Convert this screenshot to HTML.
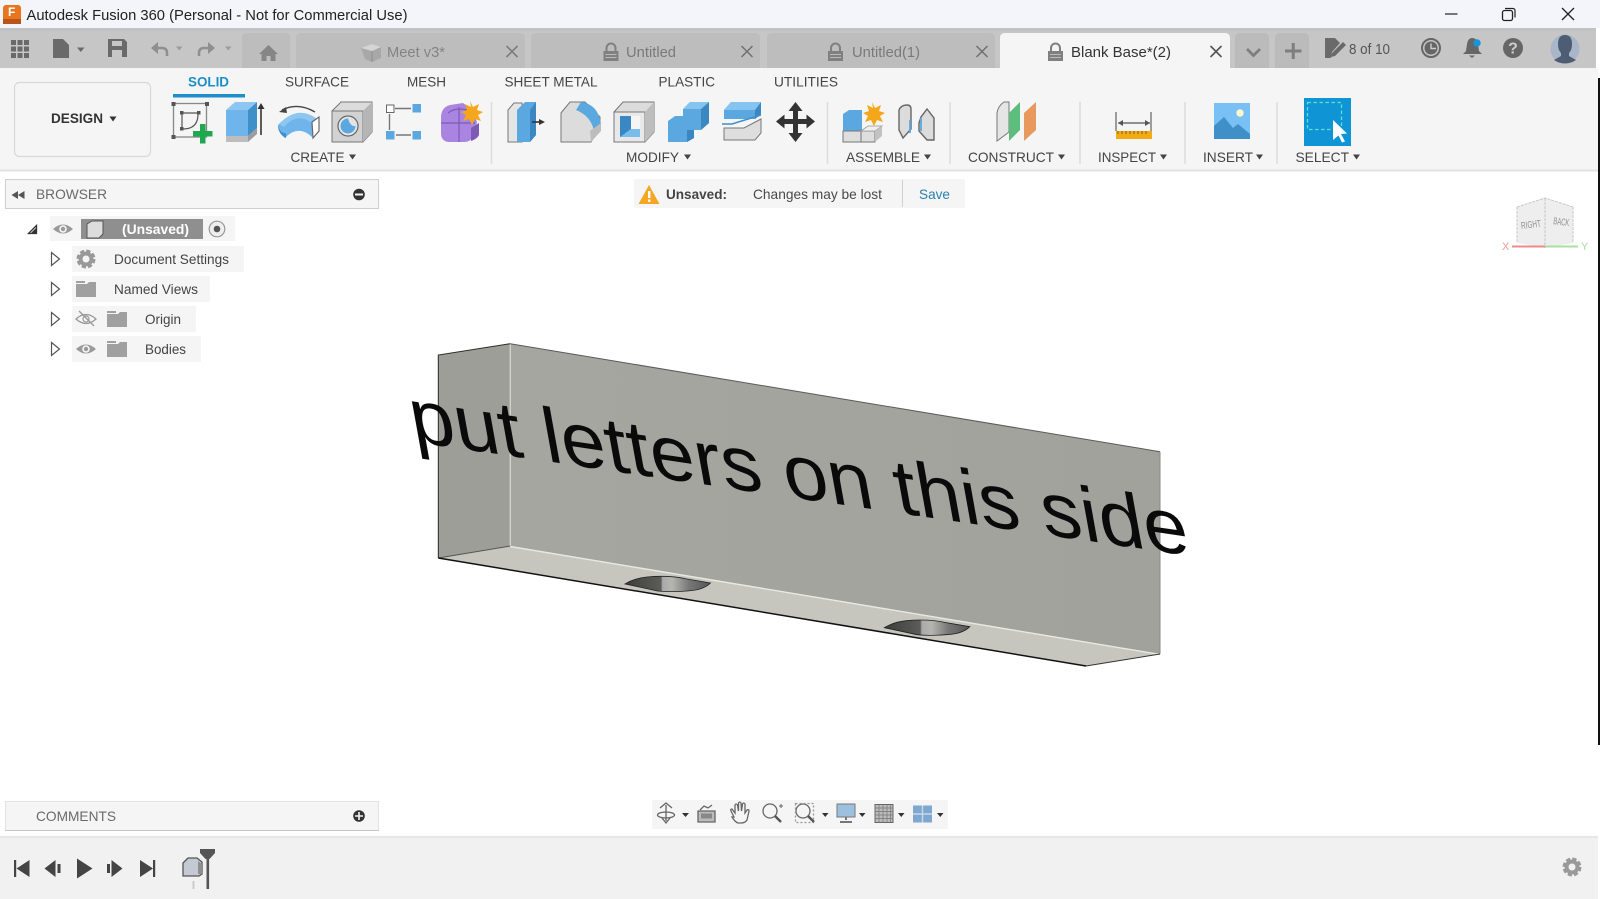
<!DOCTYPE html>
<html><head><meta charset="utf-8"><title>Autodesk Fusion 360</title>
<style>html,body{margin:0;padding:0;background:#fff;overflow:hidden}svg{display:block}text{font-family:"Liberation Sans",Arial,sans-serif}</style></head>
<body>
<svg width="1600" height="899" viewBox="0 0 1600 899" xmlns="http://www.w3.org/2000/svg">
<defs>
<linearGradient id="h1" x1="0" x2="1" y1="0" y2="0"><stop offset="0" stop-color="#3c3c3a"/><stop offset=".42" stop-color="#5c5c58"/><stop offset=".44" stop-color="#aaa"/><stop offset=".55" stop-color="#b5b5b0"/><stop offset=".75" stop-color="#777"/><stop offset="1" stop-color="#555"/></linearGradient>
<linearGradient id="ff" x1="0" x2="1" y1="0" y2="0"><stop offset="0" stop-color="#a6a6a0"/><stop offset="1" stop-color="#a2a29c"/></linearGradient>
<g id="eye"><path d="M-10 0Q0-9 10 0Q0 9-10 0Z" fill="#9a9a9a"/><circle r="3.800" fill="#f5f5f5"/><circle r="2.200" fill="#9a9a9a"/></g>
<g id="folder"><path d="M0 1h9v2H0z" fill="#a0a0a0"/><path d="M0 4h11l2-2h7v15H0z" fill="#a0a0a0"/></g>
<path id="expand" d="M0 0L8 6.500L0 13Z" fill="#fff" stroke="#555" stroke-width="1.200"/>
<g id="gear"><circle r="7.500" fill="none" stroke="#999" stroke-width="4" stroke-dasharray="3.900 2"/><circle r="5.500" fill="none" stroke="#999" stroke-width="4"/></g>
<g id="lock"><path d="M3 8V5a4.500 4.500 0 0 1 9 0v3" fill="none" stroke="#808080" stroke-width="2"/><rect y="8" width="15" height="10" fill="#808080"/><path d="M2 11.500h11M2 14.500h11" stroke="#bbb" stroke-width="1"/></g>
</defs>

<!-- title bar -->
<rect width="1600" height="28" fill="#f3f5fa"/>
<rect x="3" y="5" width="18" height="19" rx="3" fill="#e8761e"/>
<rect x="3" y="19" width="18" height="5" fill="#b9541a"/>
<text x="8" y="16" font-size="12" font-weight="bold" fill="#fff">F</text>
<text x="26.500" y="20" font-size="14.500" fill="#222" textLength="381" lengthAdjust="spacingAndGlyphs">Autodesk Fusion 360 (Personal - Not for Commercial Use)</text>
<path d="M1445 14h12.500" stroke="#222" stroke-width="1.200"/>
<path d="M1505 8.500h8a2 2 0 0 1 2 2v7" fill="none" stroke="#222" stroke-width="1.200"/>
<rect x="1502.500" y="10.500" width="10" height="10" rx="2" fill="none" stroke="#222" stroke-width="1.300"/>
<path d="M1562 8l12 12M1574 8l-12 12" stroke="#222" stroke-width="1.300"/>

<!-- tab bar -->
<rect y="28" width="1596" height="40" fill="#c6c6c6"/>
<rect y="28" width="1596" height="3" fill="#bfc3c3"/>
<g fill="#6a6a6a">
<rect x="11" y="40" width="5" height="5"/><rect x="17.500" y="40" width="5" height="5"/><rect x="24" y="40" width="5" height="5"/>
<rect x="11" y="46.500" width="5" height="5"/><rect x="17.500" y="46.500" width="5" height="5"/><rect x="24" y="46.500" width="5" height="5"/>
<rect x="11" y="53" width="5" height="5"/><rect x="17.500" y="53" width="5" height="5"/><rect x="24" y="53" width="5" height="5"/>
<path d="M53 39h10l6 6v13H53z"/>
<path d="M77 47.500h7.500l-3.750 4.500z"/>
<path d="M108 39h16l3 3v15h-19zM112 41v5h10v-5zM112 50v7h10v-7z" fill-rule="evenodd"/>
</g>
<g fill="none" stroke="#8f8f8f" stroke-width="2.500"><path d="M167 56v-3q0-5-5-5h-9"/><path d="M199 56v-3q0-5 5-5h9"/></g>
<path d="M158 42l-7 6 7 6zM208 42l7 6-7 6z" fill="#8f8f8f"/>
<path d="M176 46.500h6.500l-3.250 4zM225 46.500h6.500l-3.250 4z" fill="#9c9c9c"/>

<path d="M242 68V38q0-5 5-5h38q5 0 5 5v30z" fill="#bdbdbd"/>
<path d="M259 54l9.500-9 9.500 9h-2.500v7h-5v-5h-4v5h-5v-7z" fill="#868686"/>

<path d="M296 68V38q0-5 5-5h219q5 0 5 5v30z" fill="#bdbdbd"/>
<path d="M361 48l11-4 9 3v11l-9 4-7-3z" fill="#a8a8a8"/><path d="M361 48l11 3 9-4-9-3z" fill="#d5d5d5"/><path d="M372 51v11" stroke="#8d8d8d"/>
<text x="387" y="57" font-size="14.500" fill="#848484" textLength="58" lengthAdjust="spacingAndGlyphs">Meet v3*</text>
<path d="M506.500 46l11 11M517.500 46l-11 11" stroke="#7c7c7c" stroke-width="1.600"/>

<path d="M531 68V38q0-5 5-5h219q5 0 5 5v30z" fill="#bdbdbd"/>
<use href="#lock" x="603.500" y="43"/>
<text x="626" y="57" font-size="14.500" fill="#7a7a7a" textLength="50" lengthAdjust="spacingAndGlyphs">Untitled</text>
<path d="M741.500 46l11 11M752.500 46l-11 11" stroke="#707070" stroke-width="1.500"/>

<path d="M767 68V38q0-5 5-5h218q5 0 5 5v30z" fill="#bdbdbd"/>
<use href="#lock" x="828" y="43"/>
<text x="852" y="57" font-size="14.500" fill="#7a7a7a" textLength="68" lengthAdjust="spacingAndGlyphs">Untitled(1)</text>
<path d="M976.500 46l11 11M987.500 46l-11 11" stroke="#707070" stroke-width="1.500"/>

<path d="M1000 68V38q0-5 5-5h220q5 0 5 5v30z" fill="#f5f5f5"/>
<use href="#lock" x="1048" y="43"/>
<text x="1071" y="57" font-size="14.500" fill="#333" textLength="100" lengthAdjust="spacingAndGlyphs">Blank Base*(2)</text>
<path d="M1210.500 46l11 11M1221.500 46l-11 11" stroke="#555" stroke-width="1.600"/>

<path d="M1235 68V38q0-5 5-5h24q5 0 5 5v30z" fill="#bbb"/>
<path d="M1247 49l6.500 6.500 6.500-6.500" fill="none" stroke="#7e7e7e" stroke-width="2.800"/>
<path d="M1275 68V38q0-5 5-5h24q5 0 5 5v30z" fill="#bbb"/>
<path d="M1285 51h16.500M1293.250 43v16" stroke="#7e7e7e" stroke-width="3"/>

<path d="M1325 38h10l5 5-8 9-1 6h-6z" fill="#6a6a6a"/>
<path d="M1343 42l3 3-11 11-4 1 1-4z" fill="#6a6a6a"/>
<text x="1349" y="54" font-size="14.500" fill="#555" textLength="41" lengthAdjust="spacingAndGlyphs">8 of 10</text>
<circle cx="1431" cy="48" r="9" fill="none" stroke="#666" stroke-width="2"/><circle cx="1431" cy="48" r="6.500" fill="#666"/><path d="M1431 43.500V48.500h5" fill="none" stroke="#ccc" stroke-width="1.400"/>
<path d="M1472 38q5 0 6 6l1 7 3 3h-19l3-3 1-7q1-6 5-6z" fill="#666"/><path d="M1469 55.500h6l-3 2.500z" fill="#666"/>
<circle cx="1477" cy="43" r="3.700" fill="#1c93d8"/>
<circle cx="1513" cy="48" r="10" fill="#666"/>
<text x="1513" y="53.500" font-size="16" font-weight="bold" fill="#ccc" text-anchor="middle">?</text>
<circle cx="1565" cy="49" r="14.500" fill="#a9b5c9"/>
<path d="M1565 35q7 0 7 9 0 6-3 9v3l7 4q-5 3.500-11 3.500t-11-3.500l7-4v-3q-3-3-3-9 0-9 7-9z" fill="#4e5c74"/>

<!-- ribbon -->
<rect y="68" width="1598" height="102" fill="#f5f5f5"/>
<rect y="169.500" width="1598" height="2" fill="#e2e2e2"/>
<rect x="14.500" y="82.500" width="136" height="74" rx="5" fill="#f5f5f5" stroke="#d8d8d8" stroke-width="1.200"/>
<text x="51" y="123" font-size="14" font-weight="bold" fill="#333" textLength="52" lengthAdjust="spacingAndGlyphs">DESIGN</text>
<path d="M109.500 116.500h7l-3.500 5z" fill="#333"/>
<text x="188" y="86.500" font-size="14" font-weight="bold" fill="#1d8ec7" textLength="41" lengthAdjust="spacingAndGlyphs">SOLID</text>
<rect x="173" y="94" width="72" height="3.500" fill="#1d8ec7"/>
<g font-size="14" fill="#444">
<text x="285" y="86.500" textLength="64" lengthAdjust="spacingAndGlyphs">SURFACE</text>
<text x="407" y="86.500" textLength="39" lengthAdjust="spacingAndGlyphs">MESH</text>
<text x="504.500" y="86.500" textLength="93" lengthAdjust="spacingAndGlyphs">SHEET METAL</text>
<text x="658.500" y="86.500" textLength="56.500" lengthAdjust="spacingAndGlyphs">PLASTIC</text>
<text x="774" y="86.500" textLength="64" lengthAdjust="spacingAndGlyphs">UTILITIES</text>
<text x="290.500" y="162" textLength="54" lengthAdjust="spacingAndGlyphs">CREATE</text>
<text x="626" y="162" textLength="53" lengthAdjust="spacingAndGlyphs">MODIFY</text>
<text x="846" y="162" textLength="74" lengthAdjust="spacingAndGlyphs">ASSEMBLE</text>
<text x="968" y="162" textLength="86" lengthAdjust="spacingAndGlyphs">CONSTRUCT</text>
<text x="1098" y="162" textLength="58" lengthAdjust="spacingAndGlyphs">INSPECT</text>
<text x="1203" y="162" textLength="50" lengthAdjust="spacingAndGlyphs">INSERT</text>
<text x="1295.500" y="162" textLength="53.500" lengthAdjust="spacingAndGlyphs">SELECT</text>
</g>
<g fill="#444">
<path d="M349 154.500h7l-3.500 5zM684 154.500h7l-3.500 5zM924 154.500h7l-3.500 5zM1058 154.500h7l-3.500 5zM1160 154.500h7l-3.500 5zM1256 154.500h7l-3.500 5zM1353 154.500h7l-3.500 5z"/>
</g>
<g stroke="#dcdcdc" stroke-width="1.500"><path d="M491.500 102v62M827.500 102v62M950 102v62M1080 102v62M1185 102v62M1277 102v62"/></g>

<!-- sketch -->
<g>
<rect x="173.500" y="103.500" width="33" height="33.500" fill="none" stroke="#888" stroke-width="1.300"/>
<g fill="#555"><rect x="171.500" y="102" width="4" height="4"/><rect x="205" y="102" width="4" height="4"/><rect x="171.500" y="135" width="4" height="4"/><rect x="180" y="111" width="3.500" height="3.500"/><rect x="197" y="111" width="3.500" height="3.500"/><rect x="180" y="127" width="3.500" height="3.500"/></g>
<path d="M182 113h16M182 113v16M198 114q0 15-15 15" fill="none" stroke="#555" stroke-width="1.200"/>
<path d="M200 124h5.500v7h7v5.500h-7v7H200v-7h-7V131h7z" fill="#1fa84f"/>
</g>
<!-- extrude -->
<path d="M226 110h22v26h-22z" fill="#6fb4ea"/><path d="M248 110l9-8v26l-9 8z" fill="#3f8fc9"/><path d="M226 110h22l9-8h-22z" fill="#8cc6f1"/>
<path d="M226 136h22v6h-22z" fill="#bdbdbd"/><path d="M248 136l9-8v6l-9 8z" fill="#9c9c9c"/>
<path d="M261 135v-28" stroke="#333" stroke-width="1.600"/><path d="M257.500 109l3.500-6 3.500 6z" fill="#333"/>
<!-- revolve -->
<path d="M278 125Q297 106 315 121L312 137Q298 124 285 138Q278 133 278 125Z" fill="#6fb4ea"/>
<path d="M278 125Q280 134 286 133L286 138Q278 134 278 125Z" fill="#3f8fc9"/>
<path d="M279 124Q297 105 316 118L312 123Q297 112 284 127Z" fill="#8cc6f1"/>
<path d="M312 122l7-5v14l-6 7z" fill="#fff" stroke="#666" stroke-width="1.200"/>
<path d="M282 110q16-8 33 2" fill="none" stroke="#444" stroke-width="1.400"/><path d="M279 112l7-5 1 6z" fill="#444"/>
<!-- hole -->
<path d="M332 111l9-9h31v30l-9 10h-31z" fill="#dcdcdc" stroke="#777" stroke-width="1"/>
<path d="M332 111h31v31h-31z" fill="#d2d2d2" stroke="#777" stroke-width="1"/><path d="M363 111l9-9v30l-9 10z" fill="#b5b5b5"/>
<circle cx="348" cy="126" r="10" fill="#e5e5e5" stroke="#666" stroke-width="1.200"/><circle cx="348" cy="126" r="7.500" fill="#5ba8e0"/><path d="M348 118.500a7.500 7.500 0 0 1 7.500 7.500q-5 1-7.500-7.500z" fill="#e5e5e5"/>
<!-- pattern -->
<rect x="386.500" y="105" width="7.500" height="7.500" fill="#fff" stroke="#666" stroke-width="1"/><rect x="412.500" y="104" width="8.500" height="8.500" fill="#5ba8e0"/><rect x="386" y="131" width="8.500" height="8.500" fill="#5ba8e0"/><rect x="412.500" y="131" width="8.500" height="8.500" fill="#5ba8e0"/>
<path d="M395 108.500h16M389.500 114v16M396 135h15" stroke="#777" stroke-width="1.400"/>
<!-- form -->
<path d="M441 116q1-9 9-11l13-2 9 7 5 12-3 13q-3 7-10 7h-14q-9 0-9-9z" fill="#a984e0"/>
<path d="M448 113q7-6 19-3M441 123h34M459 107v35" stroke="#7d5bb5" stroke-width="1.200" fill="none"/>
<path d="M471 128l8-5v12q-2 4-8 6z" fill="#7d5bb5"/>
<path d="M470 101l3 6 6-3-2 6 6 2-5 3 3 6-6-2-3 6-3-6-6 2 3-6-5-3 6-2-2-6 6 3z" fill="#f5a71b"/>

<!-- press pull -->
<path d="M508 110l6-7h8v39h-14z" fill="#e5e5e5" stroke="#777" stroke-width="1"/>
<path d="M517 110l8-8h11v33l-6 7h-13z" fill="#5ba8e0"/><path d="M530 110l6-8v33l-6 7z" fill="#3a87c2"/>
<path d="M532 122h9" stroke="#333" stroke-width="1.600"/><path d="M539 119l6 3-6 3z" fill="#333"/>
<!-- fillet -->
<path d="M561 113l9-11h15l15 15v9l-9 16h-30z" fill="#dcdcdc" stroke="#777" stroke-width="1"/>
<path d="M581 102q17 2 20 22l-7 7q-3-15-18-21z" fill="#5ba8e0"/><path d="M590 131l11-8v8l-10 11z" fill="#bdbdbd"/>
<!-- shell -->
<path d="M614 112l9-10h31v30l-9 10h-31z" fill="#dcdcdc" stroke="#777" stroke-width="1"/><path d="M614 112h31v30h-31z" fill="#e8e8e8" stroke="#777" stroke-width="1"/><path d="M645 112l9-10v30l-9 10z" fill="#bdbdbd"/>
<path d="M620 116h11v13h9v8h-20z" fill="#3a87c2"/><path d="M631 116h9v13h-9z" fill="#f5f5f5"/><path d="M620 137l11-8h9v8z" fill="#78bcee"/>
<!-- combine -->
<path d="M668 121l7-5h8v-7l7-7h19v21l-8 7h-7v8l-7 4h-19z" fill="#5ba8e0"/>
<path d="M701 109l8-7v21l-8 7zM687 130l7 0v8l-7 4z" fill="#3a87c2"/>
<path d="M683 109h18l8-7h-19z" fill="#85c3f1"/>
<!-- split -->
<path d="M724 110l7-8h30v12l-6 5h-31z" fill="#5ba8e0"/><path d="M755 110l6-8v12l-6 5z" fill="#3a87c2"/><path d="M724 110h31l6-8h-30z" fill="#85c3f1"/>
<path d="M722 124h10l29-9" fill="none" stroke="#3f8fc9" stroke-width="1.500"/>
<path d="M724 128h20l17-9v14l-6 7h-31z" fill="#dedede" stroke="#777" stroke-width="1"/>
<!-- move -->
<path d="M795.500 102l7 9h-4.500v8h8.500v-4.500l8.500 7-8.500 7v-4.500h-8.500v9h4.500l-7 9-7-9h4.500v-9h-8.500v4.500l-8.500-7 8.500-7v4.500h8.500v-8h-4.500z" fill="#333"/>
<!-- new component -->
<path d="M843 121v-7l6-4h13v21h-19z" fill="#5ba8e0"/>
<path d="M843 131h18v11h-18z" fill="#dedede" stroke="#777" stroke-width="1"/>
<path d="M861 131h14v11h-14z" fill="#dedede" stroke="#777" stroke-width="1"/><path d="M861 131l7-5h14l-7 5z" fill="#efefef" stroke="#999" stroke-width=".8"/><path d="M875 131l7-5v10l-7 6z" fill="#c2c2c2"/>
<path d="M872 102l3 6 6-3-2 6 6 2-5 3 3 6-6-2-3 6-3-6-6 2 3-6-5-3 6-2-2-6 6 3z" fill="#f5a71b"/>
<!-- joint -->
<path d="M899 130v-20q2-5 8-5 4 0 4 4v20l-8 9z" fill="#dcdcdc" stroke="#666" stroke-width="1.400"/>
<path d="M934 140v-22l-7-9-6 8-2 6v8l8 9z" fill="#dcdcdc" stroke="#666" stroke-width="1.400"/>
<path d="M910 120v13M921 118v13" stroke="#5ba8e0" stroke-width="1.800"/>
<!-- construct -->
<path d="M997 113q1-7 7-11h5v30l-12 9z" fill="#e5e5e5" stroke="#777" stroke-width="1"/>
<path d="M1009 113l11-11v28l-11 11z" fill="#5cbd7d"/>
<path d="M1024 113l12-11v28l-12 11z" fill="#e89a5e"/>
<!-- inspect -->
<path d="M1116 112v19M1151 112v19" stroke="#777" stroke-width="1.400"/><path d="M1118 123h32" stroke="#555" stroke-width="1.200"/><path d="M1118 123l5-3v6zM1150 123l-5-3v6z" fill="#555"/>
<rect x="1116" y="131" width="36" height="8" fill="#f2aa15"/><path d="M1118 131v3M1122 131v3M1126 131v3M1130 131v3M1134 131v3M1138 131v3M1142 131v3M1146 131v3" stroke="#7a6128" stroke-width="1"/>
<!-- insert -->
<rect x="1214" y="103" width="36" height="36" fill="#79c1f5"/>
<path d="M1214 139v-13l10-9 9 11 5-4 12 10v5z" fill="#3f8fc9"/>
<circle cx="1240" cy="113" r="3.700" fill="#fff6c8"/>
<!-- select -->
<rect x="1304" y="98" width="47" height="48" fill="#0f94d6"/>
<rect x="1307.500" y="102.500" width="34" height="27" fill="none" stroke="#5fe0c8" stroke-width="1.300" stroke-dasharray="3.500 2.500"/>
<path d="M1333 120l14 13.500-6 .5 4 7.500-3 1-3.500-7-5.500 4.500z" fill="#fff"/>

<!-- browser -->
<rect x="5.500" y="179.500" width="373" height="29" fill="#f5f5f5" stroke="#cfcfcf"/>
<path d="M18 191v8l-6.500-4zM24.500 191v8l-6.500-4z" fill="#555"/>
<text x="36" y="199" font-size="14" fill="#6a6a6a" textLength="71" lengthAdjust="spacingAndGlyphs">BROWSER</text>
<circle cx="359" cy="194.500" r="5.800" fill="#333"/><rect x="355" y="193.500" width="8" height="2" fill="#f5f5f5"/>

<rect x="50" y="216" width="185" height="25" fill="#f5f5f5"/>
<path d="M28.500 233.500h8v-8z" fill="#fff" stroke="#333" stroke-width="1.300"/><path d="M31 233h5v-5z" fill="#333"/>
<use href="#eye" x="63" y="229"/>
<rect x="81" y="219" width="122" height="20" fill="#8f8f8f"/>
<path d="M87 224l5-3h11v13l-4 4H87z" fill="#dcdcdc" stroke="#555" stroke-width="1"/>
<text x="122" y="234" font-size="14" font-weight="bold" fill="#fff" textLength="67" lengthAdjust="spacingAndGlyphs">(Unsaved)</text>
<circle cx="217" cy="229" r="7.800" fill="#eee" stroke="#999" stroke-width="1.200"/><circle cx="217" cy="229" r="3.300" fill="#555"/>

<rect x="72" y="246" width="172" height="26" fill="#f5f5f5"/>
<use href="#expand" x="51.500" y="252.500"/><use href="#gear" x="86" y="259"/>
<text x="114" y="264" font-size="14" fill="#444" textLength="115" lengthAdjust="spacingAndGlyphs">Document Settings</text>

<rect x="72" y="276" width="138" height="26" fill="#f5f5f5"/>
<use href="#expand" x="51.500" y="282.500"/><use href="#folder" x="76" y="280"/>
<text x="114" y="294" font-size="14" fill="#444" textLength="84" lengthAdjust="spacingAndGlyphs">Named Views</text>

<rect x="72" y="306" width="124" height="26" fill="#f5f5f5"/>
<use href="#expand" x="51.500" y="312.500"/>
<path d="M76 319Q86 310 96 319Q86 328 76 319Z" fill="none" stroke="#999" stroke-width="1.300"/><circle cx="86" cy="319" r="3" fill="none" stroke="#999" stroke-width="1.200"/><path d="M79 311l15 15" stroke="#999" stroke-width="1.300"/>
<use href="#folder" x="107" y="310"/>
<text x="145" y="324" font-size="14" fill="#444" textLength="36" lengthAdjust="spacingAndGlyphs">Origin</text>

<rect x="72" y="336" width="129" height="26" fill="#f5f5f5"/>
<use href="#expand" x="51.500" y="342.500"/><use href="#eye" x="86" y="349"/><use href="#folder" x="107" y="340"/>
<text x="145" y="354" font-size="14" fill="#444" textLength="41" lengthAdjust="spacingAndGlyphs">Bodies</text>

<!-- alert -->
<rect x="634" y="179" width="331" height="29" rx="2" fill="#f5f5f5"/>
<path d="M649 185l10.500 19h-21z" fill="#f5a623"/><rect x="648" y="191" width="2.400" height="7" fill="#fff"/><rect x="648" y="199.500" width="2.400" height="2.400" fill="#fff"/>
<text x="666" y="199" font-size="14" font-weight="bold" fill="#444" textLength="61" lengthAdjust="spacingAndGlyphs">Unsaved:</text>
<text x="753" y="199" font-size="14" fill="#4a4a4a" textLength="129" lengthAdjust="spacingAndGlyphs">Changes may be lost</text>
<path d="M902.500 180v27" stroke="#cfcfcf" stroke-width="1"/>
<text x="919" y="199" font-size="14" fill="#2a7fb0" textLength="31" lengthAdjust="spacingAndGlyphs">Save</text>

<!-- view cube -->
<path d="M1517 207l28-9 28 9v36l-28 5-28-5z" fill="#eeeeee"/>
<path d="M1517 207l28-9 28 9M1545 198v50M1517 207v36M1573 207v36" fill="none" stroke="#c8c8c8" stroke-width="1" stroke-dasharray="3 1"/>
<text x="1521" y="228" font-size="10" fill="#8f8f8f" transform="rotate(-7 1530 225)" textLength="20" lengthAdjust="spacingAndGlyphs">RIGHT</text>
<text x="1553" y="225" font-size="10" fill="#8f8f8f" transform="rotate(7 1560 225)" textLength="16" lengthAdjust="spacingAndGlyphs">BACK</text>
<path d="M1512 246.500h33" stroke="#f08a8a" stroke-width="2"/><path d="M1545 246.500h33" stroke="#a8e0a0" stroke-width="2"/>
<text x="1502" y="250" font-size="11" fill="#f59a9a">X</text><text x="1581" y="250" font-size="11" fill="#a8e0a0">Y</text>

<!-- model -->
<path d="M438.300 355L510.200 343.700V546L438.300 558Z" fill="#9e9e98"/>
<path d="M510.200 343.700L1160 451.700V654L510.200 546Z" fill="url(#ff)"/>
<path d="M438.300 558L510.200 546L1160 654L1086 666Z" fill="#c6c6be"/>
<path d="M510.200 546.500L1160 654.500" stroke="#e8e8e2" stroke-width="1.400"/>
<path d="M510.200 343.700V546" stroke="#e4e4e0" stroke-width="1"/>
<path d="M438.300 558V355L510.200 343.700" fill="none" stroke="#2a2a2a" stroke-width="1"/>
<path d="M510.200 343.700L1160 451.700" fill="none" stroke="#5a5a5a" stroke-width="1"/>
<path d="M1160 451.700V654" fill="none" stroke="#8a8a86" stroke-width="1"/>
<path d="M1160 654L1086 666" fill="none" stroke="#333" stroke-width="1"/>
<path d="M438.300 558L510.200 546" fill="none" stroke="#555" stroke-width="1"/>
<path d="M438.300 558L1086 666" stroke="#111" stroke-width="1.500"/>
<path d="M625 584q10-6 22-7 22-2 40 2l23.500 4q-6 6-18 7.500-20 2-35 .5l-9-2z" fill="url(#h1)" stroke="#222" stroke-width=".8"/>
<path d="M884.300 627.700q10-6 22-7 22-2 40 2l23.500 4q-6 6-18 7.500-20 2-35 .5l-9-2z" fill="url(#h1)" stroke="#222" stroke-width=".8"/>
<text transform="matrix(1 .147 .18 1 414 441.700)" font-size="78" fill="#0a0a0a" textLength="778" lengthAdjust="spacingAndGlyphs">put letters on this side</text>

<!-- nav bar -->
<rect x="652" y="800" width="296" height="29" fill="#f5f5f5"/>
<g fill="none" stroke="#666" stroke-width="1.300">
<path d="M666 805v16M660 808l6-5 6 5M662 818l4 5 4-5"/><ellipse cx="666" cy="815" rx="8.500" ry="3"/>
<path d="M698 811h17v11h-17z" fill="#bbb"/><rect x="701" y="813.500" width="11" height="5" fill="#888" stroke="none"/><path d="M700 810l4-4 4 2M708 808l4-3"/>
<path d="M734 817l-3-6q-1-2 1-2l3 4v-8q1-2 2.500 0l1 6v-8q1-2 2.500 0l.5 8 1-7q1-2 2.500 0v9l2-3q2-1 2 1l-2 9q-2 3-6 3h-3q-3-1-6-6z" fill="#f5f5f5"/>
<circle cx="770" cy="811" r="7"/><circle cx="803" cy="811" r="7"/>
<rect x="795.500" y="803.500" width="18" height="19" stroke-dasharray="2 2" stroke="#999"/>
</g>
<path d="M775 816l6 6M808 816l6 6" stroke="#555" stroke-width="2.400"/>
<path d="M779 806h4M781 804v4" stroke="#666" stroke-width="1"/>
<rect x="837" y="804" width="18" height="13" fill="#9dc0df" stroke="#777" stroke-width="1"/><path d="M846 817v3M840 822h12" stroke="#777" stroke-width="2"/>
<rect x="875" y="804.500" width="18" height="18" fill="#bbb" stroke="#666" stroke-width="1"/>
<path d="M875 808h18M875 811.500h18M875 815h18M875 818.500h18M879 804.500v18M883 804.500v18M887 804.500v18M890.500 804.500v18" stroke="#777" stroke-width=".7"/>
<rect x="913" y="805.500" width="19" height="17" fill="#7fa8d0"/><path d="M922.500 805.500v17M913 814h19" stroke="#c6d8ea" stroke-width="1.400"/>
<path d="M682 813h7l-3.500 4zM822 813h6.500l-3.250 4zM859 813h6.500l-3.250 4zM898 813h6.500l-3.250 4zM937 813h6.500l-3.250 4z" fill="#333"/>

<!-- comments -->
<rect x="5.500" y="801.500" width="373" height="29" fill="#f5f5f5" stroke="#e2e2e2"/>
<path d="M5 830.500h374" stroke="#c4c4c4"/>
<text x="36" y="821" font-size="14" fill="#6a6a6a" textLength="80" lengthAdjust="spacingAndGlyphs">COMMENTS</text>
<circle cx="359" cy="816" r="5.800" fill="#333"/><path d="M355 816h8M359 812v8" stroke="#f5f5f5" stroke-width="1.600"/>

<!-- timeline -->
<rect y="836" width="1598" height="63" fill="#f1f1f1"/>
<rect y="836" width="1598" height="2" fill="#e6e6e6"/>
<g fill="#444">
<rect x="14" y="860" width="2.200" height="17"/><path d="M29.500 860v17l-13-8.500z"/>
<path d="M55.500 860v17l-11-8.500z"/><rect x="57.500" y="864" width="3" height="9"/>
<path d="M77 858.500l15.500 10-15.500 10z"/>
<rect x="107" y="864" width="3" height="9"/><path d="M111.500 860v17l11-8.500z"/>
<path d="M140 860v17l13-8.500z"/><rect x="153" y="860" width="2.200" height="17"/>
</g>
<path d="M183 863l5-5h9l5 4v12l-3 2h-16z" fill="#c4c9d4" stroke="#555" stroke-width="1.300"/>
<path d="M198 861l4 3v10h-4z" fill="#8f8f8f"/>
<rect x="192.500" y="881" width="2" height="8" fill="#ccc"/>
<path d="M200 849h15v4l-5.500 6h-4l-5.500-6z" fill="#555"/><rect x="206.500" y="855" width="2.600" height="34" fill="#555"/>
<use href="#gear" x="1572" y="867"/>

<!-- right edge -->
<rect x="1598" y="78" width="2" height="667" fill="#111"/>
</svg>
</body></html>
